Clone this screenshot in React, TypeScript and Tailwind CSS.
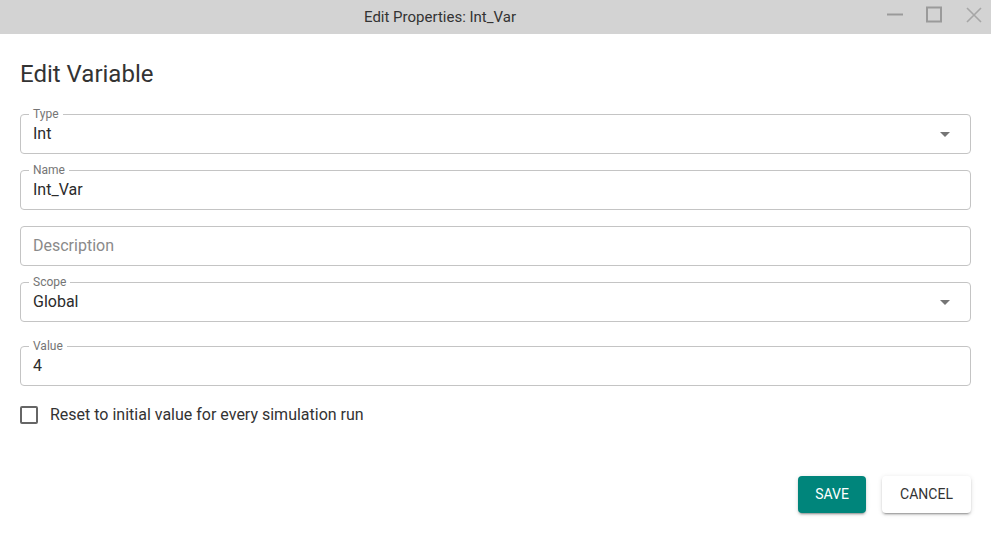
import { ReactNode } from "react"

const shadow =
  "shadow-[0px_3px_1px_-2px_rgba(0,0,0,0.2),0px_2px_2px_0px_rgba(0,0,0,0.14),0px_1px_5px_0px_rgba(0,0,0,0.12)]"

function Field({
  label,
  value,
  placeholder,
  select,
  className = "",
}: {
  label?: string
  value?: string
  placeholder?: string
  select?: boolean
  className?: string
}) {
  return (
    <div
      className={`relative h-10 rounded border border-[#c4c4c4] flex items-center pl-3 pr-3 ${className}`}
    >
      {label && (
        <span className="absolute left-2 -top-[7px] bg-white px-1 text-[12px] leading-[12px] text-[#757575]">
          {label}
        </span>
      )}
      <span className={`flex-1 text-[16px] ${value ? "text-[#2b2b2b]" : "text-[#8a8a8a]"}`}>
        {value || placeholder}
      </span>
      {select && (
        <svg width="24" height="24" viewBox="0 0 24 24" className="mr-[1px]">
          <path d="M7 10l5 5 5-5z" fill="#757575" />
        </svg>
      )}
    </div>
  )
}

function Btn({ children, primary }: { children: ReactNode; primary?: boolean }) {
  return (
    <button
      className={`h-[37px] rounded-[4px] text-[14px] uppercase ${shadow} ${
        primary ? "bg-[#00857b] text-white w-[68px]" : "bg-white text-[#333] w-[89px]"
      }`}
    >
      {children}
    </button>
  )
}

export default function App() {
  return (
    <div className="w-[991px] h-[550px] bg-white font-['Roboto',sans-serif] flex flex-col">
      {/* Title bar */}
      <div className="h-[34px] bg-[#d3d3d3] flex items-center">
        <div className="flex-1 flex justify-center">
          <span className="text-[15px] text-[#333]">Edit Properties: Int_Var</span>
        </div>
        <div className="flex items-center pr-[1px]">
          <svg width="40" height="34" viewBox="0 0 40 34">
            <path d="M7 14.5h16" stroke="#9a9a9a" strokeWidth="2" />
          </svg>
          <svg width="40" height="34" viewBox="0 0 40 34">
            <rect x="7" y="7.5" width="14" height="14" fill="none" stroke="#9a9a9a" strokeWidth="2" />
          </svg>
          <svg width="30" height="34" viewBox="0 0 30 34">
            <path d="M7 8l14 14M21 8L7 22" stroke="#a6a6a6" strokeWidth="1.6" />
          </svg>
        </div>
      </div>

      <div className="px-5 flex flex-col">
        <h1 className="mt-[26px] text-[24px] leading-[28px] text-[#333]">Edit Variable</h1>

        <div className="mt-[26px] flex flex-col gap-4">
          <Field label="Type" value="Int" select />
          <Field label="Name" value="Int_Var" />
          <Field placeholder="Description" />
          <Field label="Scope" value="Global" select />
          <Field label="Value" value="4" className="mt-2" />
        </div>

        <label className="mt-5 flex items-center gap-3 h-[18px]">
          <span className="w-[18px] h-[18px] rounded-[2px] border-2 border-[#666]" />
          <span className="text-[16px] text-[#333]">Reset to initial value for every simulation run</span>
        </label>

        <div className="mt-[52px] flex justify-end gap-4">
          <Btn primary>Save</Btn>
          <Btn>Cancel</Btn>
        </div>
      </div>
    </div>
  )
}
